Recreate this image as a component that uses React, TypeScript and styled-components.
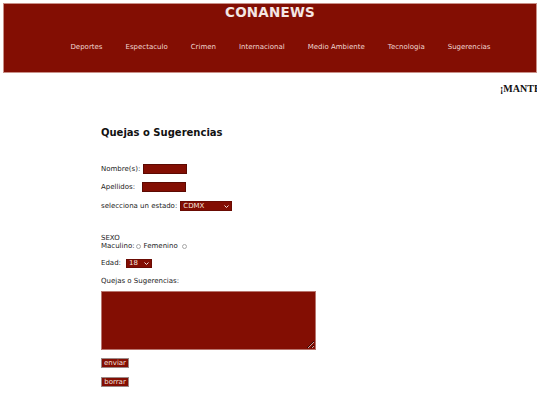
import React from 'react';
import styled, { createGlobalStyle } from 'styled-components';

const RED = '#830e03';

const GlobalStyle = createGlobalStyle`
  html, body {
    margin: 0;
    padding: 0;
    background: #ffffff;
    overflow: hidden;
  }
  body {
    padding: 3px 3px 0;
    font-family: 'DejaVu Sans', Verdana, sans-serif;
    color: #222222;
  }
  * {
    box-sizing: border-box;
  }
`;

const Header = styled.header`
  height: 70px;
  background-color: ${RED};
  border: 1px solid #c99088;
  display: flex;
  flex-direction: column;
  align-items: center;
`;

const Brand = styled.h1`
  margin: 0;
  height: 16px;
  line-height: 16px;
  font-size: 13.5px;
  font-weight: bold;
  color: #f4e6e4;
  letter-spacing: 0.2px;
`;

const Nav = styled.ul`
  list-style: none;
  margin: 22px 0 0;
  padding: 0 0 0 21px;
  display: flex;
  gap: 23px;
  height: 10px;
  align-items: center;
`;

const NavItem = styled.li`
  font-size: 7px;
  line-height: 10px;
  color: #f0d6d2;
  white-space: nowrap;
`;

const Ticker = styled.div`
  margin-top: 9px;
  height: 13px;
  line-height: 13px;
  padding-left: 497px;
  overflow: hidden;
  white-space: nowrap;
  font-family: 'Liberation Serif', 'Times New Roman', serif;
  font-weight: bold;
  font-size: 10px;
  color: #111111;
`;

const Main = styled.main`
  padding-left: 98px;
  display: flex;
  flex-direction: column;
  align-items: flex-start;
`;

const Title = styled.h2`
  margin: 32px 0 0;
  height: 12px;
  line-height: 12px;
  font-size: 10px;
  font-weight: bold;
  color: #111111;
`;

const Row = styled.div<{ top: number; height?: number }>`
  margin-top: ${({ top }) => top}px;
  height: ${({ height }) => height ?? 10}px;
  display: flex;
  align-items: center;
  font-size: 7px;
  line-height: ${({ height }) => height ?? 10}px;
  color: #222222;
  white-space: nowrap;
`;

const TextInput = styled.input<{ offset: number }>`
  margin: 0 0 0 ${({ offset }) => offset}px;
  width: 44px;
  height: 10px;
  padding: 0;
  background-color: ${RED};
  border: 1px solid #5c0902;
  outline: none;
`;

const SelectWrap = styled.span<{ offset: number }>`
  position: relative;
  display: inline-flex;
  margin-left: ${({ offset }) => offset}px;
`;

const Select = styled.select<{ w: number; h: number }>`
  appearance: none;
  width: ${({ w }) => w}px;
  height: ${({ h }) => h}px;
  margin: 0;
  padding: 0 0 0 2px;
  font-family: 'DejaVu Sans', Verdana, sans-serif;
  font-size: 7px;
  line-height: ${({ h }) => h - 2}px;
  color: #f4e2de;
  background-color: ${RED};
  border: 1px solid #6a0b03;
  border-radius: 0;
  outline: none;
`;

const Chevron = styled.svg`
  position: absolute;
  right: 3px;
  top: 50%;
  width: 5px;
  height: 3px;
  margin-top: -1.5px;
  pointer-events: none;
`;

const Radio = styled.input<{ lead?: number }>`
  appearance: none;
  width: 5px;
  height: 5px;
  margin: 0 3px 0 ${({ lead }) => lead ?? 1}px;
  border: 1px solid #a8a8a8;
  border-radius: 50%;
  background: #ffffff;
`;

const TextArea = styled.textarea`
  margin-top: 5px;
  width: 215px;
  height: 59px;
  padding: 0;
  resize: both;
  background-color: ${RED};
  border: 1px solid #b9756e;
  outline: none;
`;

const Button = styled.button<{ top: number }>`
  margin-top: ${({ top }) => top}px;
  width: 28px;
  height: 10px;
  padding: 0;
  font-family: 'DejaVu Sans', Verdana, sans-serif;
  font-size: 7px;
  line-height: 8px;
  color: #f4e2de;
  background-color: ${RED};
  border: 1px solid #9a8a88;
  border-radius: 0;
`;

const sections = [
  'Deportes',
  'Espectaculo',
  'Crimen',
  'Internacional',
  'Medio Ambiente',
  'Tecnologia',
  'Sugerencias',
];

const Dropdown: React.FC<{
  offset: number;
  w: number;
  h: number;
  options: string[];
}> = ({ offset, w, h, options }) => (
  <SelectWrap offset={offset}>
    <Select w={w} h={h} defaultValue={options[0]}>
      {options.map((o) => (
        <option key={o}>{o}</option>
      ))}
    </Select>
    <Chevron viewBox="0 0 5 3">
      <path d="M0.5 0.5 L2.5 2.5 L4.5 0.5" fill="none" stroke="#f4e2de" strokeWidth="1" />
    </Chevron>
  </SelectWrap>
);

const App: React.FC = () => (
  <>
    <GlobalStyle />
    <Header>
      <Brand>CONANEWS</Brand>
      <Nav>
        {sections.map((s) => (
          <NavItem key={s}>{s}</NavItem>
        ))}
      </Nav>
    </Header>
    <Ticker>¡MANTENTE INFORMADO CON CONANEWS!</Ticker>
    <Main>
      <Title>Quejas o Sugerencias</Title>
      <Row top={25}>
        Nombre(s):
        <TextInput offset={2.5} />
      </Row>
      <Row top={8}>
        Apellidos:
        <TextInput offset={7} />
      </Row>
      <Row top={9}>
        selecciona un estado:
        <Dropdown offset={3} w={52} h={10} options={['CDMX', 'Jalisco', 'Nuevo León']} />
      </Row>
      <Row top={23} height={8}>
        SEXO
      </Row>
      <Row top={0} height={8}>
        Maculino:
        <Radio type="radio" name="sexo" />
        Femenino
        <Radio type="radio" name="sexo" lead={4} />
      </Row>
      <Row top={8}>
        Edad:
        <Dropdown offset={5} w={26} h={9} options={['18', '19', '20', '21']} />
      </Row>
      <Row top={8}>Quejas o Sugerencias:</Row>
      <TextArea />
      <Button top={8}>enviar</Button>
      <Button top={9}>borrar</Button>
    </Main>
  </>
);

export default App;
